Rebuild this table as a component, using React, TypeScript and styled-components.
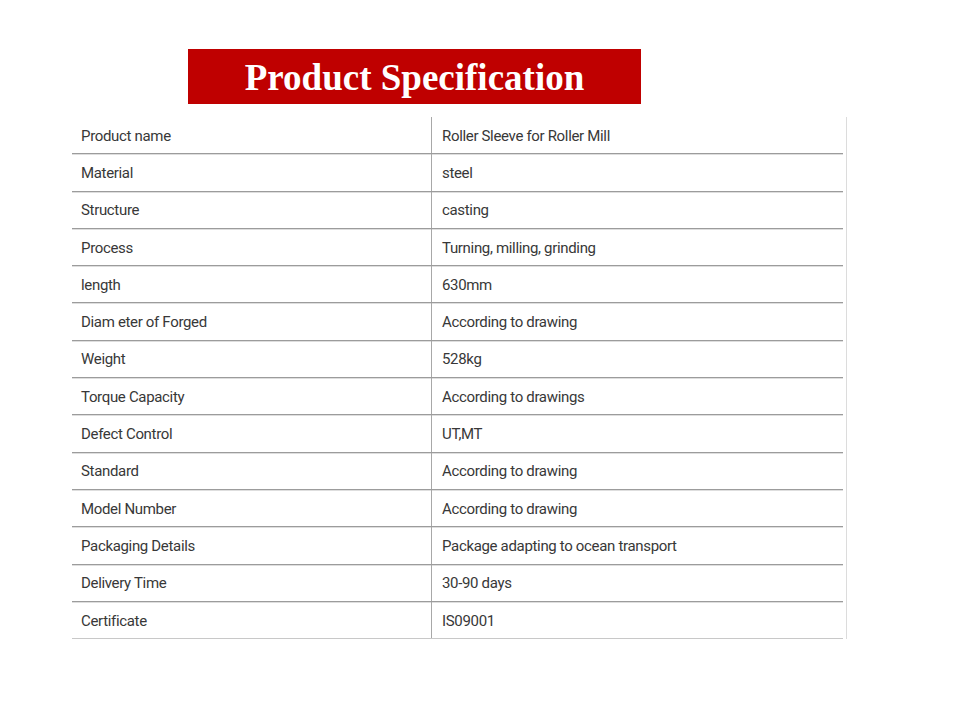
import React from "react";
import styled, { createGlobalStyle } from "styled-components";

const Global = createGlobalStyle`
  html, body { margin: 0; padding: 0; background: #ffffff; }
  body { width: 960px; height: 720px; overflow: hidden; }
`;

const Page = styled.div`
  display: flex;
  flex-direction: column;
  padding-top: 49px;
`;

const Banner = styled.div`
  margin-left: 188px;
  width: 453px;
  height: 55px;
  background: #bf0000;
  display: flex;
  align-items: center;
  justify-content: center;
  color: #ffffff;
  font-family: "Liberation Serif", "Times New Roman", serif;
  font-weight: bold;
  font-size: 37px;
  line-height: 1;
  padding-top: 1px;
  box-sizing: border-box;
`;

const Table = styled.div`
  margin-top: 13px;
  margin-left: 72px;
  width: 775px;
  display: flex;
  flex-direction: column;
  border-right: 1px solid #dcdcdc;
  box-sizing: border-box;
`;

const Row = styled.div<{ $last?: boolean }>`
  display: grid;
  grid-template-columns: 359px 1fr;
  height: 37.3px;
  box-sizing: border-box;
  border-bottom: 1px solid ${(p) => (p.$last ? "#c8c8c8" : "#9c9c9c")};
  box-shadow: ${(p) => (p.$last ? "none" : "0 1px 0 #dedede")};
  margin-right: 3px;
`;

const Cell = styled.div<{ $divider?: boolean }>`
  display: flex;
  align-items: center;
  padding-left: ${(p) => (p.$divider ? "10px" : "9px")};
  border-left: ${(p) => (p.$divider ? "1px solid #a8a8a8" : "none")};
  font-family: Roboto, "Liberation Sans", sans-serif;
  font-size: 15px;
  letter-spacing: -0.33px;
  color: #383838;
  padding-top: 1px;
  white-space: nowrap;
`;

const rows: [string, string][] = [
  ["Product name", "Roller Sleeve for Roller Mill"],
  ["Material", "steel"],
  ["Structure", "casting"],
  ["Process", "Turning, milling, grinding"],
  ["length", "630mm"],
  ["Diam eter of Forged", "According to drawing"],
  ["Weight", "528kg"],
  ["Torque Capacity", "According to drawings"],
  ["Defect Control", "UT,MT"],
  ["Standard", "According to drawing"],
  ["Model Number", "According to drawing"],
  ["Packaging Details", "Package adapting to ocean transport"],
  ["Delivery Time", "30-90 days"],
  ["Certificate", "IS09001"],
];

export default function App() {
  return (
    <>
      <Global />
      <Page>
        <Banner>Product Specification</Banner>
        <Table>
          {rows.map(([k, v], i) => (
            <Row key={k} $last={i === rows.length - 1}>
              <Cell>{k}</Cell>
              <Cell $divider>{v}</Cell>
            </Row>
          ))}
        </Table>
      </Page>
    </>
  );
}
